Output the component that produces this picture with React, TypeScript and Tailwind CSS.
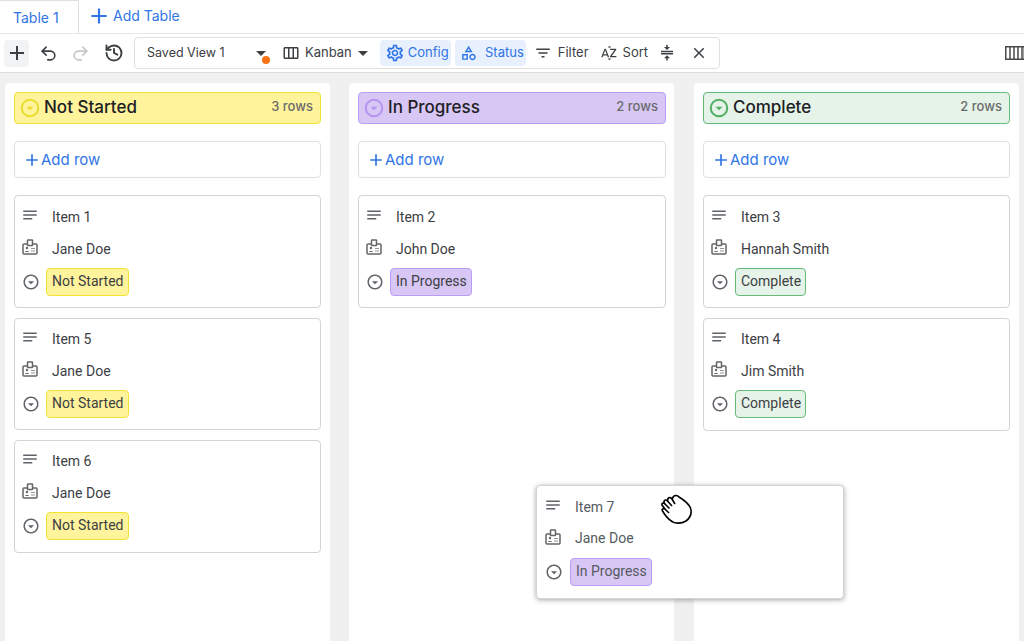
import {
  MdAdd,
  MdCompress,
  MdFilterList,
  MdNotes,
  MdOutlineArrowDropDownCircle,
  MdOutlineCategory,
  MdOutlineClose,
  MdOutlineSettings,
  MdOutlineViewWeek,
  MdSortByAlpha,
} from "react-icons/md";
import { History, Redo2, Undo2 } from "lucide-react";

type Status = "Not Started" | "In Progress" | "Complete";

const tones: Record<Status, { head: string; chip: string; icon: string }> = {
  "Not Started": {
    head: "bg-[#fff39c] border-[#f0e332]",
    chip: "bg-[#fff39c] border-[#f0e332]",
    icon: "text-[#e9dc2e]",
  },
  "In Progress": {
    head: "bg-[#d8c6f5] border-[#bb9cf5]",
    chip: "bg-[#d8c6f5] border-[#bb9cf5]",
    icon: "text-[#b692f2]",
  },
  Complete: {
    head: "bg-[#e6f3e9] border-[#66bb77]",
    chip: "bg-[#e6f3e9] border-[#66bb77]",
    icon: "text-[#4fb064]",
  },
};

const columns: { status: Status; rows: number; items: { name: string; person: string }[] }[] = [
  {
    status: "Not Started",
    rows: 3,
    items: [
      { name: "Item 1", person: "Jane Doe" },
      { name: "Item 5", person: "Jane Doe" },
      { name: "Item 6", person: "Jane Doe" },
    ],
  },
  {
    status: "In Progress",
    rows: 2,
    items: [{ name: "Item 2", person: "John Doe" }],
  },
  {
    status: "Complete",
    rows: 2,
    items: [
      { name: "Item 3", person: "Hannah Smith" },
      { name: "Item 4", person: "Jim Smith" },
    ],
  },
];

function BadgeIcon() {
  return (
    <svg viewBox="0 0 16 16" className="h-4 w-4 -translate-y-0.5 text-[#666]" fill="none" stroke="currentColor">
      <rect x="1" y="5" width="14" height="10" rx="1" strokeWidth="1.5" />
      <rect x="5.5" y="1" width="5" height="5.5" rx="0.5" fill="white" strokeWidth="1.5" />
      <circle cx="5" cy="9" r="1.2" fill="currentColor" stroke="none" />
      <path d="M3 13c0-1.4 4-1.4 4 0z" fill="currentColor" stroke="none" />
      <path d="M9 9.5h4M9 12h4" strokeWidth="1" opacity="0.7" />
    </svg>
  );
}

function HeadCircle({ className }: { className: string }) {
  return (
    <svg viewBox="0 0 22 22" className={`h-[22px] w-[22px] shrink-0 ${className}`} fill="none">
      <circle cx="11" cy="11" r="8.25" stroke="currentColor" strokeWidth="2" />
      <path d="M7.5 9.75h7L11 13.25z" fill="currentColor" />
    </svg>
  );
}

function CardBody({
  name,
  person,
  status,
  dragged,
}: {
  name: string;
  person: string;
  status: Status;
  dragged?: boolean;
}) {
  return (
    <div
      className={`flex flex-col font-['Roboto',sans-serif] text-sm ${
        dragged ? "text-[#555b60]" : "text-[#3c4043]"
      }`}
    >
      <div className="flex h-8 items-center">
        <MdNotes className="h-[18px] w-[18px] -translate-x-px -translate-y-0.5 text-[#5f6368]" />
        <span className="ml-[12px]">{name}</span>
      </div>
      <div className="flex h-8 items-center">
        <span className="w-[18px] shrink-0">
          <BadgeIcon />
        </span>
        <span className={`ml-[12px] ${dragged ? "-translate-y-px" : ""}`}>{person}</span>
      </div>
      <div className="flex h-8 items-center">
        <MdOutlineArrowDropDownCircle className="h-[18px] w-[18px] translate-y-px text-[#5f6368]" />
        <span
          className={`flex h-7 translate-y-px items-center rounded-[4px] border pr-[4px] pb-0.5 pl-[5px] ${tones[status].chip} ${
            dragged ? "ml-[7px]" : "ml-[6px]"
          }`}
        >
          {status}
        </span>
      </div>
    </div>
  );
}

function Card({ name, person, status }: { name: string; person: string; status: Status }) {
  // stacked cards sit 10px apart; the first and last are a pixel taller
  return (
    <div className="h-[112px] rounded-[4px] border border-[#d4d4d4] bg-white pt-[4px] pr-2 pl-[7px] first:h-[113px] first:pt-[5px] last:h-[113px]">
      <CardBody name={name} person={person} status={status} />
    </div>
  );
}

function ToolButton({
  icon,
  label,
  active,
  className,
}: {
  icon: React.ReactNode;
  label: string;
  active?: boolean;
  className?: string;
}) {
  return (
    <div
      className={`flex h-[26px] items-center rounded-[4px] pl-[5px] ${
        active ? "bg-[#e8f0fe] text-[#2f75e6]" : "text-[#3c4043]"
      } ${className ?? ""}`}
    >
      {icon}
      <span>{label}</span>
    </div>
  );
}

function HandCursor() {
  return (
    <svg viewBox="0 0 32 32" className="h-8 w-8" fill="white" stroke="black" strokeWidth="1.6" strokeLinejoin="round">
      <path d="M10 26 C7 24 5 21 2.5 17 C1.5 15 3 14 5 15 L2 11 C1.5 9 3 8.5 4.5 9.5 L4 7.5 C4 5.5 6 5.5 7.5 7 L8 4.5 C9 3 11 3.5 12 5 L13.5 2.5 C15 1 17.5 1.5 19 3 C24 6 29 10.5 30.5 14 C32 19 30 24 26 27 C21 30 14 30 10 26 Z" />
      <path d="M5 15 L9 19 M4.5 9.5 L9.5 14.5 M7.5 7 L12 12 M12 5 L15 10" fill="none" />
    </svg>
  );
}

export default function App() {
  return (
    <div className="relative flex h-screen flex-col overflow-hidden bg-white font-['Inter',sans-serif]">
      {/* Tabs */}
      <div className="flex h-[34px] shrink-0 items-stretch border-b border-[#e6e6e6]">
        <div className="flex w-[79px] items-center border-t border-r border-[#e0e0e0] pt-0.5 pl-[13px] text-sm text-[#2f75e6]">
          Table 1
        </div>
        <div className="ml-[7px] flex items-center text-[#2f75e6]">
          <MdAdd className="h-[26px] w-[26px] -translate-y-px" />
          <span className="ml-[1px] -translate-y-px text-sm">Add Table</span>
        </div>
      </div>

      {/* Toolbar */}
      <div className="flex h-[39px] shrink-0 items-center border-b border-[#dcdcdc] pl-1 text-[#3c4043]">
        <div className="flex h-[27px] w-[25px] items-center justify-center rounded-[4px] bg-[#f1f3f4]">
          <MdAdd className="h-6 w-6" />
        </div>
        <Undo2 size={19} strokeWidth={2} className="ml-[10px]" />
        <Redo2 size={19} strokeWidth={2} className="ml-[13px] text-[#c4c7c5]" />
        <History size={20} strokeWidth={2.3} className="ml-[14px]" />
        <div className="ml-[10px] flex h-8 w-[586px] items-center rounded-[4px] border border-[#e0e0e0] pl-3 text-[13px]">
          <div className="relative flex w-[132px] items-center justify-between">
            <span className="text-[12.5px]">Saved View 1</span>
            <span className="mr-[13px] h-0 w-0 border-x-[5px] border-t-[5px] border-x-transparent border-t-[#3c4043]" />
            <span className="absolute top-1/2 right-[9px] mt-[3px] h-2 w-2 rounded-full bg-[#f97316]" />
          </div>
          <div className="ml-[3px] flex items-center">
            <MdOutlineViewWeek className="h-[18px] w-[18px]" />
            <span className="ml-[5px]">Kanban</span>
            <span className="ml-[6px] h-0 w-0 border-x-[5px] border-t-[5px] border-x-transparent border-t-[#3c4043]" />
          </div>
          <div className="ml-[12px] flex items-center gap-[3px]">
            <ToolButton
              active
              className="mr-px w-[71px] pr-[2px]"
              icon={<MdOutlineSettings className="mr-[3px] h-5 w-5" />}
              label="Config"
            />
            <ToolButton
              active
              className="w-[71px] pr-[2px]"
              icon={<MdOutlineCategory className="mr-[8px] h-[18px] w-[18px]" />}
              label="Status"
            />
            <ToolButton
              className="pr-[3px]"
              icon={<MdFilterList className="mr-[6px] h-[18px] w-[18px]" />}
              label="Filter"
            />
            <ToolButton
              className="pr-[5px]"
              icon={<MdSortByAlpha className="mr-[5px] h-[18px] w-[18px]" />}
              label="Sort"
            />
          </div>
          <MdCompress className="ml-[5px] h-[18px] w-[18px]" />
          <MdOutlineClose className="ml-[14px] h-[18px] w-[18px]" />
        </div>
        <svg viewBox="0 0 20 14" className="absolute top-[46px] right-[-1px] h-[14px] w-5">
          <rect x="0.75" y="0.75" width="18.5" height="12.5" fill="white" stroke="#4a4a4a" strokeWidth="1.5" />
          <path d="M5 1v12M9 1v12M13 1v12M17 1v12" stroke="#4a4a4a" strokeWidth="1.5" />
        </svg>
      </div>

      {/* Board */}
      <div className="flex min-h-0 flex-1 gap-[19px] bg-[#f0f0f0] pt-2.5 pl-[5px]">
        {columns.map((col) => (
          <div
            key={col.status}
            className="flex w-[325px] flex-col rounded-t-[4px] bg-white px-[9px] pt-[9px] even:pr-2 last:ml-px"
          >
            <div
              className={`flex h-[32px] items-center rounded-[4px] border pr-[7px] pl-1 ${tones[col.status].head}`}
            >
              <HeadCircle className={tones[col.status].icon} />
              <span className="ml-[3px] text-[17px] font-medium text-[#202124]">{col.status}</span>
              <span className="ml-auto -translate-y-px text-[13px] font-medium text-[#6b6b6b]">{col.rows} rows</span>
            </div>
            <div className="mt-[17px] flex h-[37px] items-center rounded-[4px] border border-[#e0e0e0] pl-[7px] text-[15px] text-[#2f75e6]">
              <MdAdd className="h-5 w-5" />
              <span className="-ml-px translate-y-px">Add row</span>
            </div>
            <div className="mt-[17px] flex flex-col gap-[10px]">
              {col.items.map((item) => (
                <Card key={item.name} name={item.name} person={item.person} status={col.status} />
              ))}
            </div>
          </div>
        ))}
      </div>

      {/* Card being dragged */}
      <div className="absolute top-[485px] left-[536px] h-[114px] w-[308px] rounded-[4px] border border-[#d4d4d4] bg-white pt-[5px] pr-2 pl-2 shadow-[0_1px_5px_rgba(0,0,0,0.35)]">
        <CardBody dragged name="Item 7" person="Jane Doe" status="In Progress" />
      </div>
      <div className="absolute top-[494px] left-[660px]">
        <HandCursor />
      </div>
    </div>
  );
}
